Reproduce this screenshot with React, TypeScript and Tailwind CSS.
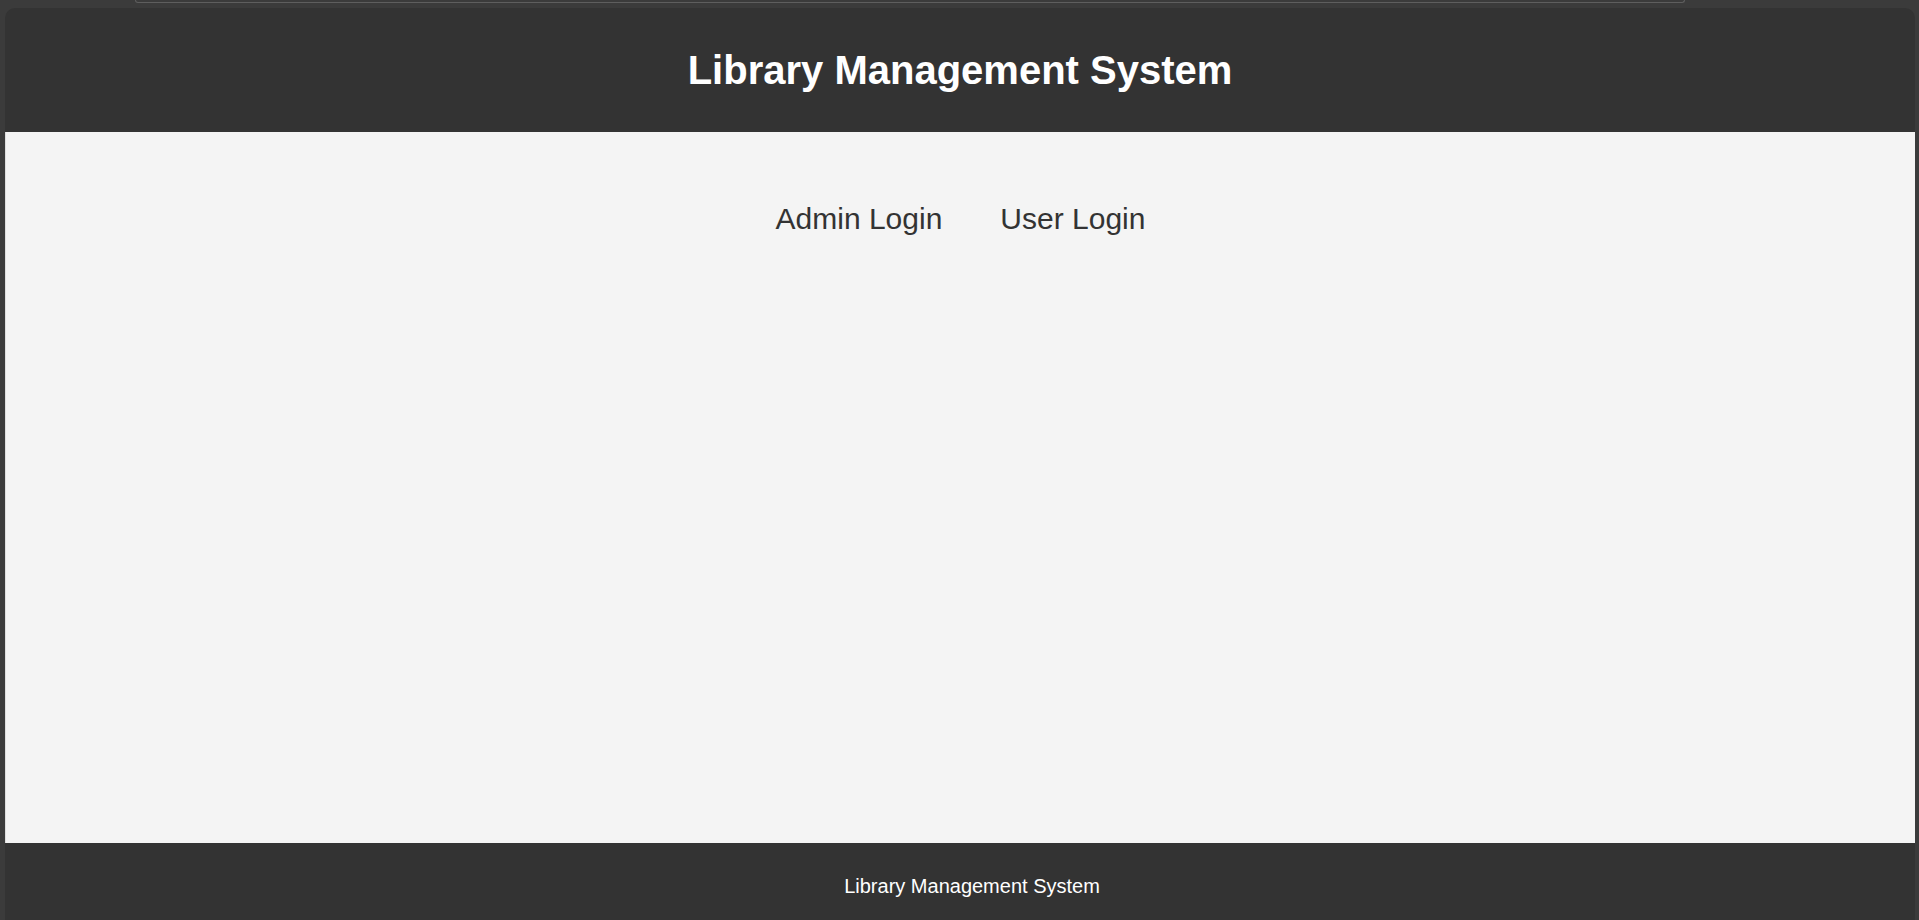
import React from "react";

const App: React.FC = () => {
  const font = { fontFamily: '"Liberation Sans", Arial, sans-serif' };

  return (
    <div
      className="relative flex h-[920px] flex-col bg-[#3b3b3b] pt-2 pl-[5px] pr-1"
      style={font}
    >
      {/* thin strip of the browser tab at the top edge */}
      <div className="absolute left-[135px] right-[234px] top-0 h-[3px] rounded-b-[6px] border-x border-b border-[#5e5e5e]" />

      <div className="flex flex-1 flex-col overflow-hidden rounded-t-[10px]">
        <header className="flex h-[124px] items-center justify-center bg-[#333333]">
          <h1 className="text-[40px] font-bold text-white">
            Library Management System
          </h1>
        </header>

        <main className="flex-1 border-l border-[#dedede] bg-[#f4f4f4] pt-[64px]">
          <nav className="flex justify-center gap-[58px] text-[30px] text-[#333333]">
            <a href="#">Admin Login</a>
            <a href="#">User Login</a>
          </nav>
        </main>

        <footer className="h-[77px] bg-[#333333] pt-[28px] pl-[24px] text-center text-[20px] text-white">
          Library Management System
        </footer>
      </div>
    </div>
  );
};

export default App;
